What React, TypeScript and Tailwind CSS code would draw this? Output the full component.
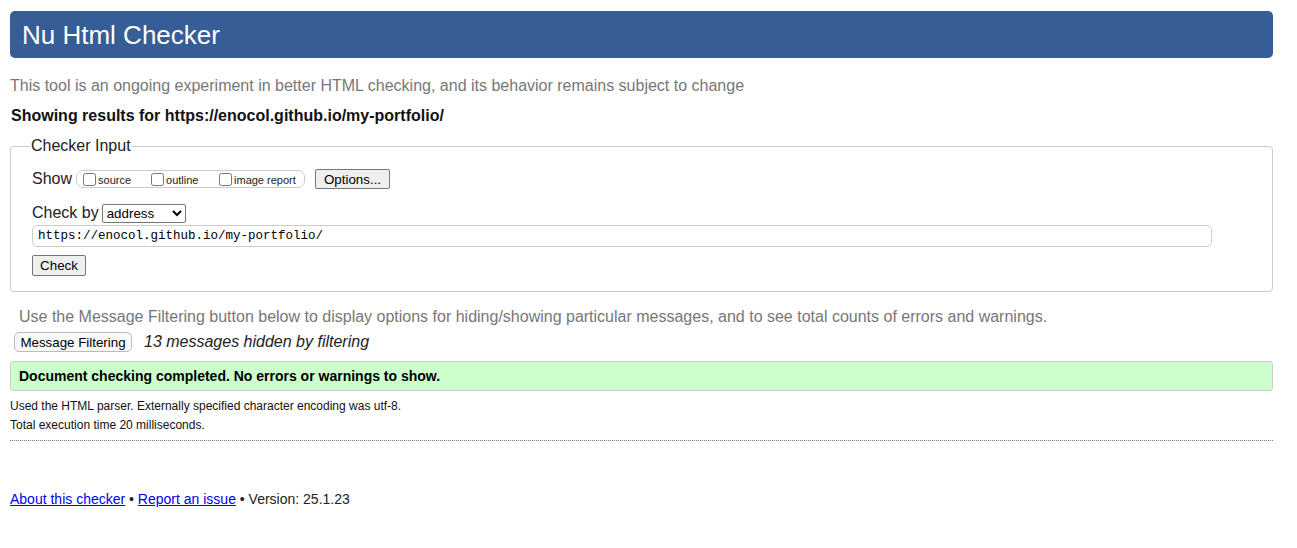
import React from "react";

export default function App() {
  return (
    <div className="bg-white text-black w-[1297px] h-[548px] overflow-hidden" style={{ fontFamily: '"Liberation Sans", Arial, sans-serif' }}>
      <div className="ml-[10px] w-[1263px]">
        <div className="mt-[11px] h-[47px] bg-[#365d95] rounded-[5px] flex items-center px-[12px]">
          <h1 className="text-white text-[26px] leading-none font-normal">Nu Html Checker</h1>
        </div>
        <p className="mt-[19px] text-[16px] leading-[18px] text-[#777]">
          This tool is an ongoing experiment in better HTML checking, and its behavior remains subject to change
        </p>
        <p className="mt-[12px] ml-[1px] text-[16px] leading-[18px] font-bold text-[#111]">
          Showing results for https://enocol.github.io/my-portfolio/
        </p>
        <fieldset className="mt-[12px] border border-[#ccc] rounded-[4px] pl-[19px] pr-[20px] pb-[15px] h-[155px]">
          <legend className="px-[1px] text-[16px] leading-[18px] text-[#222]">Checker Input</legend>
          <div className="ml-[2px] mt-[14px] flex items-center h-[20px]">
            <span className="text-[16px] text-[#222]">Show</span>
            <div className="ml-[4px] flex items-center h-[18px] border border-[#ccc] rounded-[7px] w-[229px] pl-[6px] text-[11px] text-[#222]">
              <label className="flex items-center w-[68px]">
                <input type="checkbox" className="w-[13px] h-[13px] m-0 mr-[2px]" />
                <span className="mt-[3px]">source</span>
              </label>
              <label className="flex items-center w-[68px]">
                <input type="checkbox" className="w-[13px] h-[13px] m-0 mr-[2px]" />
                <span className="mt-[3px]">outline</span>
              </label>
              <label className="flex items-center">
                <input type="checkbox" className="w-[13px] h-[13px] m-0 mr-[2px]" />
                <span className="mt-[3px]">image report</span>
              </label>
            </div>
            <button className="ml-[10px] h-[20px] w-[75px] bg-[#efefef] border border-[#767676] rounded-[2px] text-[13.33px] text-black">Options...</button>
          </div>
          <div className="ml-[2px] mt-[14px] flex items-center h-[20px]">
            <span className="text-[16px] text-[#222]">Check by</span>
            <select className="ml-[3px] h-[19px] w-[84px] border border-[#767676] rounded-[2px] text-[13.33px] bg-white text-black">
              <option>address</option>
            </select>
          </div>
          <div className="mt-[2px] ml-[2px] h-[22px] w-[1180px] border border-[#ccc] rounded-[5px] flex items-center pl-[5px] text-[12.5px] text-black" style={{ fontFamily: '"Liberation Mono", "DejaVu Sans Mono", monospace' }}>
            https://enocol.github.io/my-portfolio/
          </div>
          <button className="mt-[8px] ml-[2px] h-[21px] w-[54px] bg-[#efefef] border border-[#767676] rounded-[2px] text-[13.33px] text-black">Check</button>
        </fieldset>
        <p className="mt-[16px] ml-[9px] text-[16px] leading-[18px] text-[#777]">
          Use the Message Filtering button below to display options for hiding/showing particular messages, and to see total counts of errors and warnings.
        </p>
        <div className="mt-[6px] ml-[4px] flex items-center h-[20px]">
          <button className="h-[20px] w-[118px] bg-[#f9f9f9] border border-[#bbb] rounded-[5px] text-[13.33px] text-black">Message Filtering</button>
          <span className="ml-[12px] italic text-[16px] text-[#222]">13 messages hidden by filtering</span>
        </div>
        <div className="mt-[9px] h-[30px] bg-[#ccffcc] border border-[#ccc] rounded-[3px] flex items-center pl-[8px] text-[14px] font-bold text-black">
          Document checking completed. No errors or warnings to show.
        </div>
        <p className="mt-[8px] text-[12px] leading-[14px] text-[#111]">Used the HTML parser. Externally specified character encoding was utf-8.</p>
        <p className="mt-[5px] text-[12px] leading-[14px] text-[#111]">Total execution time 20 milliseconds.</p>
        <div className="mt-[8px] border-t border-dotted border-[#777]"></div>
        <p className="mt-[50px] text-[14px] leading-[16px] text-[#222]">
          <a href="#" className="text-[#0000ee] underline">About this checker</a> • <a href="#" className="text-[#0000ee] underline">Report an issue</a> • Version: 25.1.23
        </p>
      </div>
    </div>
  );
}
